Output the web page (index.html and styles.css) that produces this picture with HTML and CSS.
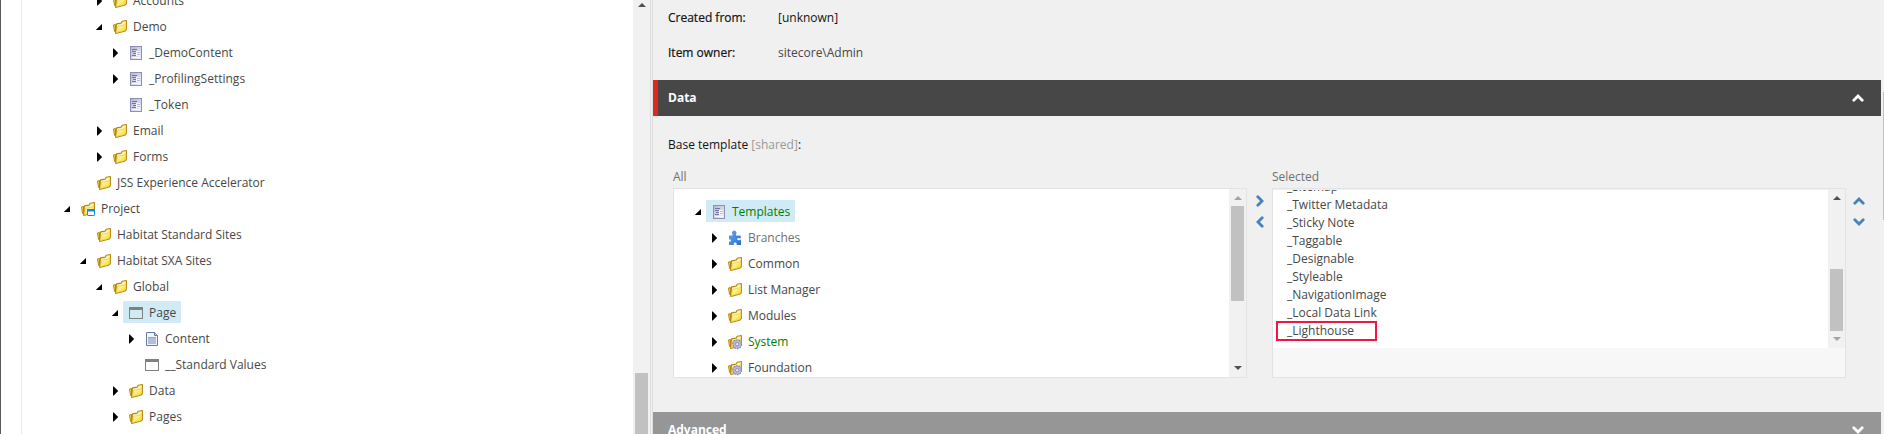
FILE: index.html
```
<!DOCTYPE html>
<html lang="en">
<head>
<meta charset="utf-8">
<title>Template Manager</title>
<link rel="stylesheet" href="styles.css">
</head>
<body>
<svg class="defs" width="0" height="0">
  <defs>
    <linearGradient id="gold" x1="0" y1="0" x2="1" y2="1">
      <stop offset="0" stop-color="#fffbdc"/><stop offset=".5" stop-color="#fdee7c"/><stop offset="1" stop-color="#f3cd10"/>
    </linearGradient>
    <linearGradient id="blue" x1="0" y1="0" x2="1" y2="1">
      <stop offset="0" stop-color="#64a8ee"/><stop offset="1" stop-color="#2a6fcb"/>
    </linearGradient>
    <linearGradient id="lilac" x1="0" y1="0" x2="1" y2="1">
      <stop offset="0" stop-color="#b4b4d6"/><stop offset="1" stop-color="#f2f2fa"/>
    </linearGradient>
    <symbol id="folder" viewBox="0 0 16 16">
      <path d="M1.5 6L3.5 5.500V13.300L2.600 12.500Z" fill="#f6dc5a" stroke="#b8860b" stroke-linejoin="round"/>
      <path d="M4.500 4.900L9.200 4.100L10.200 2.200L14.400 1.500V10.600L12.600 12.300L3.700 14.400Z" fill="#fdf3b0" stroke="#b8860b" stroke-width="1.100" stroke-linejoin="round"/>
      <path d="M5.700 7.300L12.200 6L13.900 4.800V10.300L12.300 11.700L4.300 13.700Z" fill="url(#gold)" stroke="#e0b92e" stroke-width=".5"/>
    </symbol>
    <symbol id="project" viewBox="0 0 16 16">
      <use href="#folder"/>
      <rect x="7.500" y="8.500" width="7" height="6" rx=".6" fill="#fff" stroke="#0a8cf0"/>
      <path d="M7 8h8v2.500H7z" fill="#0a8cf0"/>
    </symbol>
    <symbol id="system" viewBox="0 0 16 16">
      <use href="#folder"/>
      <circle cx="10.200" cy="10.200" r="4.400" fill="#a5a5c8" stroke="#8585ad" stroke-width="1.200" stroke-dasharray="1.700 1"/>
      <circle cx="10.200" cy="10.200" r="3.600" fill="#b9b9d8"/>
      <circle cx="10.200" cy="10.200" r="1.700" fill="#e6e6f4" stroke="#7d7daa" stroke-width=".8"/>
    </symbol>
    <symbol id="template" viewBox="0 0 16 16">
      <rect x="2.500" y="1.500" width="11" height="13" fill="url(#lilac)" stroke="#8e8eb8"/>
      <path d="M8 6h4v5H8zM4 12h8v1H4z" fill="#fff" opacity=".8"/>
      <path d="M4 4.500h5M4 6.500h4M5 8.500h3M4 10.500h4" stroke="#7474a4"/>
      <path d="M9 7.500h3M9 9.500h3" stroke="#b9b9d8"/>
    </symbol>
    <symbol id="window" viewBox="0 0 16 16">
      <rect x="1.500" y="2.500" width="13" height="11" fill="none" stroke="#808080"/>
      <path d="M1 2h14v3H1z" fill="#808080"/>
    </symbol>
    <symbol id="document" viewBox="0 0 16 16">
      <path d="M2.500 1.500H10.500L13.500 4.500V14.500H2.500Z" fill="#f3f6fc" stroke="#6579ab"/>
      <path d="M10.500 1.500V4.500H13.500" fill="#b4c4e4" stroke="#6579ab"/>
      <path d="M4 7h8v6H4z" fill="#b3bddd"/><path d="M4 6.500h8" stroke="#93a3cd"/>
    </symbol>
    <symbol id="puzzle" viewBox="0 0 16 16">
      <path d="M2 5.500H5.500V4.200A2.200 2.200 0 1 1 9 4.200V5.500H12V8.300Q10.300 7.600 10.200 9.200Q10.300 10.700 12 10.200L14 9.500V15H9.600V13.500A1.500 1.500 0 0 0 6.800 13.500V15H2V11.500H3.800V9.500H2Z" fill="url(#blue)"/>
      <path d="M12 5.800H13.700V8.300H12Z" fill="#2f74ce"/>
    </symbol>
    <symbol id="closed" viewBox="0 0 16 16"><path d="M6 3.500H6.700L11.200 8L6.700 12.500H6Z"/></symbol>
    <symbol id="open" viewBox="0 0 16 16"><path d="M11 5V11H4.800Z"/></symbol>
    <symbol id="chevron" viewBox="0 0 12 8"><path d="M1.800 6.200L6 2L10.200 6.200" fill="none" stroke="currentColor" stroke-width="2.800" stroke-linecap="round"/></symbol>
  </defs>
</svg>

<div class="app">
  <nav class="sidebar">
    <div class="gutter"></div>
    <div class="tree content-tree">
      <div class="row d2"><svg class="arrow"><use href="#closed"/></svg><span class="node"><svg class="icon"><use href="#folder"/></svg>Accounts</span></div>
      <div class="row d2"><svg class="arrow"><use href="#open"/></svg><span class="node"><svg class="icon"><use href="#folder"/></svg>Demo</span></div>
      <div class="row d3"><svg class="arrow"><use href="#closed"/></svg><span class="node"><svg class="icon"><use href="#template"/></svg>_DemoContent</span></div>
      <div class="row d3"><svg class="arrow"><use href="#closed"/></svg><span class="node"><svg class="icon"><use href="#template"/></svg>_ProfilingSettings</span></div>
      <div class="row d3"><svg class="arrow"></svg><span class="node"><svg class="icon"><use href="#template"/></svg>_Token</span></div>
      <div class="row d2"><svg class="arrow"><use href="#closed"/></svg><span class="node"><svg class="icon"><use href="#folder"/></svg>Email</span></div>
      <div class="row d2"><svg class="arrow"><use href="#closed"/></svg><span class="node"><svg class="icon"><use href="#folder"/></svg>Forms</span></div>
      <div class="row d1"><svg class="arrow"></svg><span class="node"><svg class="icon"><use href="#folder"/></svg>JSS Experience Accelerator</span></div>
      <div class="row d0"><svg class="arrow"><use href="#open"/></svg><span class="node"><svg class="icon"><use href="#project"/></svg>Project</span></div>
      <div class="row d1"><svg class="arrow"></svg><span class="node"><svg class="icon"><use href="#folder"/></svg>Habitat Standard Sites</span></div>
      <div class="row d1"><svg class="arrow"><use href="#open"/></svg><span class="node"><svg class="icon"><use href="#folder"/></svg>Habitat SXA Sites</span></div>
      <div class="row d2"><svg class="arrow"><use href="#open"/></svg><span class="node"><svg class="icon"><use href="#folder"/></svg>Global</span></div>
      <div class="row d3"><svg class="arrow"><use href="#open"/></svg><span class="node active"><svg class="icon"><use href="#window"/></svg>Page</span></div>
      <div class="row d4"><svg class="arrow"><use href="#closed"/></svg><span class="node"><svg class="icon"><use href="#document"/></svg>Content</span></div>
      <div class="row d4"><svg class="arrow"></svg><span class="node"><svg class="icon"><use href="#window"/></svg>__Standard Values</span></div>
      <div class="row d3"><svg class="arrow"><use href="#closed"/></svg><span class="node"><svg class="icon"><use href="#folder"/></svg>Data</span></div>
      <div class="row d3"><svg class="arrow"><use href="#closed"/></svg><span class="node"><svg class="icon"><use href="#folder"/></svg>Pages</span></div>
    </div>
    <div class="scrollbar side-scroll"><i class="tri up"></i><i class="thumb"></i></div>
  </nav>
  <div class="splitter"></div>
  <main class="editor">
    <dl class="info">
      <dt>Created from:</dt><dd class="strong">[unknown]</dd>
      <dt>Item owner:</dt><dd>sitecore\Admin</dd>
    </dl>
    <header class="section current">Data<svg class="toggle"><use href="#chevron"/></svg></header>
    <section class="body">
      <p class="field">Base template <span>[shared]</span>:</p>
      <div class="picker">
        <div class="column">
          <label>All</label>
          <div class="box">
            <div class="tree all-tree">
              <div class="row d0"><svg class="arrow"><use href="#open"/></svg><span class="node active green"><svg class="icon"><use href="#template"/></svg>Templates</span></div>
              <div class="row d1"><svg class="arrow"><use href="#closed"/></svg><span class="node muted"><svg class="icon"><use href="#puzzle"/></svg>Branches</span></div>
              <div class="row d1"><svg class="arrow"><use href="#closed"/></svg><span class="node"><svg class="icon"><use href="#folder"/></svg>Common</span></div>
              <div class="row d1"><svg class="arrow"><use href="#closed"/></svg><span class="node"><svg class="icon"><use href="#folder"/></svg>List Manager</span></div>
              <div class="row d1"><svg class="arrow"><use href="#closed"/></svg><span class="node"><svg class="icon"><use href="#folder"/></svg>Modules</span></div>
              <div class="row d1"><svg class="arrow"><use href="#closed"/></svg><span class="node green"><svg class="icon"><use href="#system"/></svg>System</span></div>
              <div class="row d1"><svg class="arrow"><use href="#closed"/></svg><span class="node"><svg class="icon"><use href="#system"/></svg>Foundation</span></div>
            </div>
            <div class="scrollbar all-scroll"><i class="tri up dim"></i><i class="thumb"></i><i class="tri down"></i></div>
          </div>
        </div>
        <div class="buttons move"><svg class="right"><use href="#chevron"/></svg><svg class="left"><use href="#chevron"/></svg></div>
        <div class="column">
          <label>Selected</label>
          <div class="box listbox">
            <div class="options">
              <ul>
                <li>_Sitemap</li><li>_Twitter Metadata</li><li>_Sticky Note</li><li>_Taggable</li><li>_Designable</li><li>_Styleable</li><li>_NavigationImage</li><li>_Local Data Link</li><li class="marked">_Lighthouse</li>
              </ul>
              <div class="scrollbar list-scroll"><i class="tri up"></i><i class="thumb"></i><i class="tri down dim"></i></div>
            </div>
          </div>
        </div>
        <div class="buttons sort"><svg><use href="#chevron"/></svg><svg class="flip"><use href="#chevron"/></svg></div>
      </div>
    </section>
    <header class="section">Advanced<svg class="toggle flip"><use href="#chevron"/></svg></header>
  </main>
  <div class="page-scroll"><i></i></div>
</div>
</body>
</html>
```
FILE: styles.css
```
*, *::after { box-sizing: border-box; }
html, body { height: 434px; overflow: hidden; }
body { margin: 0; font: 12px/18px "Open Sans", sans-serif; color: #474747; background: #f0f0f0; }
svg { display: block; flex: none; }
.defs { position: absolute; }
.app { display: flex; height: 434px; overflow: hidden; }

.sidebar { display: flex; width: 650px; background: #fff; border-left: 1px solid #5a5a5a; }
.gutter { width: 21px; border-right: 1px solid #ebebeb; }
.tree { flex: 1; overflow: hidden; }
.content-tree { padding-left: 37px; margin-top: -12px; }
.row { display: flex; align-items: center; height: 26px; }
.d1 { padding-left: 16px; }
.d2 { padding-left: 32px; }
.d3 { padding-left: 48px; }
.d4 { padding-left: 64px; }
.arrow, .icon { width: 16px; height: 16px; }
.node { display: flex; align-items: center; gap: 5px; height: 22px; margin-bottom: 2px; padding: 2px 5px 0; white-space: nowrap; }
.active { background: #d0ebf6; }
.green { color: #008000; }
.muted { color: #707070; }

.scrollbar { display: flex; flex-direction: column; align-items: center; width: 17px; background: #f1f1f1; }
.thumb { width: 13px; background: #c1c1c1; }
.tri { border: 4px solid transparent; border-top-width: 0; border-bottom: 4px solid #505050; }
.tri.down { border-bottom-width: 0; border-top: 4px solid #505050; }
.tri.up.dim { border-bottom-color: #a3a3a3; }
.tri.down.dim { border-top-color: #a3a3a3; }
.side-scroll { padding-top: 3px; }
.side-scroll .thumb { height: 61px; margin-top: 366px; }
.splitter { width: 3px; background: #f0f0f0; border: 1px solid #dedede; border-width: 0 1px; }

.editor { width: 1228px; height: 434px; overflow: hidden; background: #f0f0f0; }
.info { display: grid; grid-template-columns: 110px 1fr; grid-auto-rows: 35px; height: 80px; margin: 0; padding: 9px 0 0 15px; color: #131313; }
.info dt { -webkit-text-stroke: .2px #131313; }
.info dd { margin: 0; color: #474747; }
.info .strong { color: #131313; }
.section { display: flex; align-items: center; justify-content: space-between; height: 36px; padding: 0 17px 0 15px; color: #fff; font-weight: 700; background: #969696; }
.section.current { padding-left: 10px; border-left: 5px solid #dc291e; background: #474747; }
.toggle { width: 12px; height: 8px; }
.flip { transform: scaleY(-1); }
.body { height: 296px; padding: 20px 15px 0; }
.field { margin: 0; height: 32px; color: #131313; }
.field span { color: #999; }
.picker { display: flex; padding-left: 5px; }
.column { width: 574px; }
.column label { display: block; height: 20px; color: #707070; }
.box { display: flex; height: 190px; background: #fff; border: 1px solid #e3e3e3; overflow: hidden; }
.all-tree { padding: 10px 0 0 16px; }
.all-scroll { padding-top: 7px; }
.all-scroll .thumb { height: 95px; margin-top: 6px; }
.all-scroll .down { margin-top: 65px; }
.buttons { display: flex; flex-direction: column; color: #4583be; }
.buttons svg { width: 12px; height: 8px; }
.move { width: 25px; gap: 13px; padding: 29px 0 0 7px; }
.sort { gap: 13px; padding: 29px 0 0 7px; }
.right { transform: rotate(90deg); }
.left { transform: rotate(-90deg); }
.listbox { background: #f7f7f7; }
.options { display: flex; width: 100%; height: 159px; background: #fff; border-top: 1px solid #f0f0f0; }
.options ul { flex: 1; display: flex; flex-direction: column; justify-content: flex-end; margin: 0; padding: 0 0 8px 14px; list-style: none; overflow: hidden; }
.options li { flex: none; height: 18px; white-space: nowrap; }
.marked { position: relative; }
.marked::after { content: ""; position: absolute; left: -11px; top: -1px; width: 101px; height: 20px; border: 2px solid #f5143f; }
.list-scroll { padding-top: 6px; }
.list-scroll .thumb { height: 62px; margin-top: 69px; }
.list-scroll .down { margin-top: 6px; }
.page-scroll { flex: 1; padding: 92px 0 0 2px; background: #f1f1f1; }
.page-scroll i { display: block; height: 128px; background: #c1c1c1; }
```
